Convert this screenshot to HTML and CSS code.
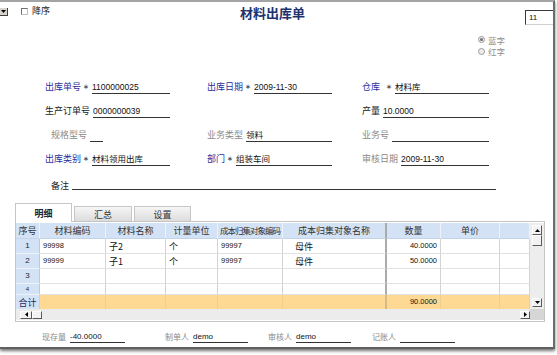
FILE: index.html
```html
<!DOCTYPE html>
<html lang="zh-CN">
<head>
<meta charset="utf-8">
<title>材料出库单</title>
<link rel="stylesheet" href="styles.css">
</head>
<body>
<div class="window">
  <header class="topbar">
    <div class="tb-left">
      <span class="combo-btn"><svg width="5" height="3" viewBox="0 0 5 3"><path d="M0 0h5L2.5 3z" fill="#000"/></svg></span>
      <span class="checkbox"></span>
      <span class="chk-label">降序</span>
    </div>
    <h1 class="title">材料出库单</h1>
    <div class="tb-right"><div class="page-input">11</div></div>
  </header>

  <div class="radios">
    <div class="radio checked"><span class="rb"></span><span class="rt">蓝字</span></div>
    <div class="radio"><span class="rb"></span><span class="rt">红字</span></div>
  </div>

  <div class="form">
    <div class="form-row">
      <div class="field c1"><span class="lbl blue">出库单号</span><span class="star">∗</span><span class="val">1100000025</span></div>
      <div class="field c2"><span class="lbl blue">出库日期</span><span class="star">∗</span><span class="val">2009-11-30</span></div>
      <div class="field c3"><span class="lbl blue">仓库</span><span class="star wide">∗</span><span class="val">材料库</span></div>
    </div>
    <div class="form-row">
      <div class="field c1"><span class="lbl">生产订单号</span><span class="val">0000000039</span></div>
      <div class="field c3"><span class="lbl">产量</span><span class="val">10.0000</span></div>
    </div>
    <div class="form-row">
      <div class="field c1"><span class="lbl gray indent">规格型号</span><span class="val short"></span></div>
      <div class="field c2"><span class="lbl gray">业务类型</span><span class="val">领料</span></div>
      <div class="field c3"><span class="lbl gray">业务号</span><span class="val"></span></div>
    </div>
    <div class="form-row">
      <div class="field c1"><span class="lbl blue">出库类别</span><span class="star">∗</span><span class="val">材料领用出库</span></div>
      <div class="field c2"><span class="lbl blue">部门</span><span class="star">∗</span><span class="val">组装车间</span></div>
      <div class="field c3"><span class="lbl gray">审核日期</span><span class="val">2009-11-30</span></div>
    </div>
    <div class="form-row remark">
      <div class="field"><span class="lbl indent">备注</span><span class="val"></span></div>
    </div>
  </div>

  <div class="tabs">
    <div class="tab active w57">明细</div>
    <div class="tab w58">汇总</div>
    <div class="tab w57">设置</div>
  </div>

  <div class="panel">
    <div class="gridarea">
      <div class="grid">
        <div class="row head">
          <div class="cell">序号</div>
          <div class="cell">材料编码</div>
          <div class="cell">材料名称</div>
          <div class="cell">计量单位</div>
          <div class="cell tight">成本归集对象编码</div>
          <div class="cell sep">成本归集对象名称</div>
          <div class="cell">数量</div>
          <div class="cell">单价</div>
          <div class="cell"></div>
        </div>
        <div class="row">
          <div class="cell rn">1</div>
          <div class="cell num">99998</div>
          <div class="cell">子2</div>
          <div class="cell">个</div>
          <div class="cell num">99997</div>
          <div class="cell sep name">母件</div>
          <div class="cell num right">40.0000</div>
          <div class="cell"></div>
          <div class="cell"></div>
        </div>
        <div class="row">
          <div class="cell rn">2</div>
          <div class="cell num">99999</div>
          <div class="cell">子1</div>
          <div class="cell">个</div>
          <div class="cell num">99997</div>
          <div class="cell sep name">母件</div>
          <div class="cell num right">50.0000</div>
          <div class="cell"></div>
          <div class="cell"></div>
        </div>
        <div class="row">
          <div class="cell rn">3</div>
          <div class="cell"></div>
          <div class="cell"></div>
          <div class="cell"></div>
          <div class="cell"></div>
          <div class="cell sep"></div>
          <div class="cell"></div>
          <div class="cell"></div>
          <div class="cell"></div>
        </div>
        <div class="row r4">
          <div class="cell rn">4</div>
          <div class="cell"></div>
          <div class="cell"></div>
          <div class="cell"></div>
          <div class="cell"></div>
          <div class="cell sep"></div>
          <div class="cell"></div>
          <div class="cell"></div>
          <div class="cell"></div>
        </div>
        <div class="row total">
          <div class="cell rn">合计</div>
          <div class="cell"></div>
          <div class="cell"></div>
          <div class="cell"></div>
          <div class="cell"></div>
          <div class="cell sep"></div>
          <div class="cell num right">90.0000</div>
          <div class="cell"></div>
          <div class="cell"></div>
        </div>
      </div>
      <div class="vscroll">
        <span class="sbtn"><svg width="5" height="3" viewBox="0 0 5 3"><path d="M0 3h5L2.5 0z" fill="#000"/></svg></span>
        <span class="sbtn vthumb"></span>
        <span class="sbtn vdown"><svg width="5" height="3" viewBox="0 0 5 3"><path d="M0 0h5L2.5 3z" fill="#000"/></svg></span>
      </div>
    </div>
    <div class="hscroll">
      <div class="htrack">
        <span class="sbtn hbtn"><svg width="3" height="5" viewBox="0 0 3 5"><path d="M3 0v5L0 2.5z" fill="#000"/></svg></span>
        <span class="sbtn hthumb"></span>
        <span class="sbtn hbtn hright"><svg width="3" height="5" viewBox="0 0 3 5"><path d="M0 0v5L3 2.5z" fill="#000"/></svg></span>
      </div>
      <div class="corner"></div>
    </div>
  </div>

  <div class="foot">
    <div class="ffield"><span class="lbl">现存量</span><span class="fval">-40.0000</span></div>
    <div class="ffield"><span class="lbl">制单人</span><span class="fval">demo</span></div>
    <div class="ffield"><span class="lbl">审核人</span><span class="fval">demo</span></div>
    <div class="ffield"><span class="lbl">记账人</span><span class="fval"></span></div>
  </div>
</div>
</body>
</html>
```

FILE: styles.css
```css
* { box-sizing: border-box; margin: 0; padding: 0; }
html, body { width: 557px; height: 355px; overflow: hidden; background: #fff; }
body {
  font-family: "Noto Sans CJK SC", "Liberation Sans", sans-serif;
  font-size: 9px;
  color: #222;
  line-height: 1;
}

.window {
  width: 555px;
  height: 349px;
  border-top: 2px solid #a4a4a4;
  border-right: 2px solid #6c6c6c;
  border-bottom: 2px solid #606060;
  box-shadow: 0 2px 3px rgba(0, 0, 0, .55);
  display: flex;
  flex-direction: column;
  background: #fff;
}

/* top bar */
.topbar { display: grid; grid-template-columns: 240px auto 1fr; height: 26px; flex: none; }
.tb-left { display: flex; align-items: flex-start; }
.combo-btn {
  margin-top: 6px; width: 8px; height: 8px;
  background: #d6d3cc;
  border-right: 1px solid #404040; border-bottom: 1px solid #404040;
  display: flex; align-items: center; justify-content: center;
}
.checkbox {
  margin: 6px 0 0 13px; width: 7px; height: 7px;
  border: 1px solid #707070; border-right-color: #c0c0c0; border-bottom-color: #c0c0c0;
  background: #fff;
}
.chk-label { margin: 3px 0 0 4px; line-height: 12px; font-size: 9px; color: #222; }
.title { font-size: 13px; font-weight: 700; color: #1c3370; line-height: 16px; margin-top: 3px; }
.tb-right { display: flex; justify-content: flex-end; }
.page-input {
  margin-top: 8px; width: 28px; height: 15px;
  border-top: 1px solid #3a3a3a; border-left: 1px solid #3a3a3a; border-bottom: 1px solid #cfcfcf;
  font-family: "Liberation Sans", sans-serif; font-size: 8px; line-height: 13px;
  padding-left: 3px; color: #111;
}

/* radios */
.radios { margin: 6px 0 0 478px; flex: none; height: 23px; }
.radio { display: flex; align-items: center; height: 11.5px; color: #8e8e8e; }
.rt { font-size: 8.5px; line-height: 10px; }
.rb {
  width: 7px; height: 7px; border-radius: 50%;
  border: 1px solid #9c9c9c; background: #ececec; margin-right: 3px;
  display: flex; align-items: center; justify-content: center;
}
.radio.checked .rb::after { content: ""; width: 3px; height: 3px; border-radius: 50%; background: #6f6f6f; }

/* form */
.form { margin-top: 18px; flex: none; }
.form-row { display: grid; grid-template-columns: 162px 155px 127px; padding-left: 45px; height: 24px; }
.field { display: flex; align-items: flex-start; padding-top: 6px; width: 125px; }
.c1 { grid-column: 1; }
.c2 { grid-column: 2; }
.c3 { grid-column: 3; width: 127px; }
.lbl { line-height: 12px; white-space: nowrap; font-size: 9px; color: #222; }
.lbl.blue { color: #2a2f9e; }
.lbl.gray { color: #8a8a8a; }
.lbl.indent { padding-left: 6px; }
.star {
  width: 6px; margin-left: 2px; text-align: center; line-height: 12px;
  font-family: "DejaVu Sans", sans-serif; font-size: 7px; color: #333;
}
.star.wide { margin-left: 6px; }
.val {
  flex: 1; margin-left: 3px; border-bottom: 1px solid #333;
  line-height: 12px; height: 13px;
  font-family: "Liberation Sans", "Noto Sans CJK SC", sans-serif; font-size: 8.5px;
  color: #111; white-space: nowrap; overflow: hidden;
}
.val.short { flex: none; width: 13px; }
.form-row.remark .field { grid-column: 1 / -1; width: 451px; padding-top: 9px; }
.remark .val { height: 10px; }

/* tabs */
.tabs { display: flex; align-items: flex-end; gap: 2px; padding-left: 15px; margin-top: 8px; height: 19px; flex: none; }
.tab {
  height: 16px; border: 1px solid #c6c6c6; border-bottom: none;
  background: linear-gradient(#f6f6f6, #dadada);
  display: flex; align-items: center; justify-content: center;
  font-size: 9px; color: #333;
}
.tab.active { position: relative; z-index: 1; height: 19px; background: #fff; font-weight: 700; color: #222; }
.w57 { width: 57px; }
.w58 { width: 58px; }

/* panel + grid */
.panel {
  position: relative; flex: none;
  margin: -1px 0 0 15px; width: 530px; height: 101px;
  border: 1px solid #c4c4c4; padding-top: 1px; background: #fff;
}
.gridarea { display: flex; height: 86px; }
.grid { width: 514px; display: flex; flex-direction: column; }
.row { display: grid; grid-template-columns: 24px 66px 60px 52px 65px 104px 54px 59px 30px; height: 15px; }
.row.head { height: 16px; }
.cell {
  border-right: 1px solid #d4d4d4; border-bottom: 1px solid #e2e2e2;
  overflow: hidden; white-space: nowrap;
  display: flex; align-items: center; padding-left: 3px;
  font-size: 9px; color: #111;
}
.row.head .cell {
  background: #d3e2f4; justify-content: center; padding: 0;
  border-right-color: #eef3fa; border-bottom: 1px solid #c4d4e8; color: #333;
}
.row.head .cell.tight { letter-spacing: -1px; font-size: 8.5px; }
.cell.rn {
  background: #d3e2f4; justify-content: center; padding: 0;
  border-right: 1px solid #b9c9de; border-bottom-color: #eef3fa;
  font-family: "Liberation Sans", "Noto Sans CJK SC", sans-serif; font-size: 8px; color: #223;
}
.cell.sep, .row.head .cell.sep { border-right: 2px solid #ababab; }
.cell.name { padding-left: 12px; }
.num { font-family: "Liberation Sans", sans-serif; font-size: 7.5px; }
.cell.right { justify-content: flex-end; padding: 0 3px 0 0; }
.row.r4 { height: 11px; }
.row.r4 .cell { align-items: flex-start; }
.row.r4 .cell.rn { font-size: 6px; padding-top: 2px; }
.row.total { height: 14px; background: #fdd993; }
.row.total .cell { border-right-color: #f0cf8c; border-bottom: none; }
.row.total .cell.sep { border-right-color: #d6bb86; }
.row.total .cell.rn { font-family: "Noto Sans CJK SC", sans-serif; font-size: 9px; color: #1d2e66; border-bottom: none; }

/* scrollbars */
.vscroll { width: 14px; background: #ededed; display: flex; flex-direction: column; align-items: center; padding-top: 2px; }
.sbtn {
  width: 10px; height: 10px; background: #f2f2f2;
  border: 1px solid; border-color: #fff #5a5a5a #5a5a5a #fff;
  display: flex; align-items: center; justify-content: center; flex: none;
}
.vthumb { height: 11px; }
.vdown { margin-top: auto; margin-bottom: 2px; height: 9px; }
.hscroll { display: flex; height: 11px; }
.htrack { width: 514px; background: #ececec; display: flex; align-items: center; padding-left: 4px; }
.hbtn { width: 12px; height: 8px; }
.hthumb { width: 10px; height: 8px; }
.hright { margin-left: auto; width: 10px; }
.corner { width: 14px; background: #d6d6d6; }

/* footer fields */
.foot { display: grid; grid-template-columns: 123px 103px 104px auto; padding-left: 42px; margin-top: 9px; flex: none; }
.ffield { display: flex; align-items: flex-start; }
.ffield .lbl { font-size: 8px; color: #8a8a8a; line-height: 12px; }
.fval {
  width: 55px; margin-left: 4px; border-bottom: 1px solid #333; height: 12px; line-height: 11px;
  font-family: "Liberation Sans", sans-serif; font-size: 8px; color: #111;
}
```
